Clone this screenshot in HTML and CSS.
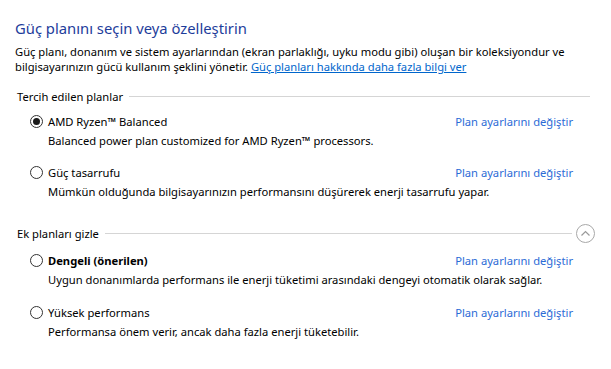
FILE: index.html
```html
<!DOCTYPE html>
<html lang="tr">
<head>
    <meta charset="UTF-8">
    <title>Güç Seçenekleri</title>
    <link rel="stylesheet" href="styles.css">
</head>
<body>
    <div class="page">
        <h1 class="title">Güç planını seçin veya özelleştirin</h1>
        <p class="intro">Güç planı, donanım ve sistem ayarlarından (ekran parlaklığı, uyku modu gibi) oluşan bir koleksiyondur ve bilgisayarınızın gücü kullanım şeklini yönetir. <a href="#" class="link">Güç planları hakkında daha fazla bilgi ver</a></p>

        <div class="section">
            <div class="section-head">
                <span class="section-label">Tercih edilen planlar</span>
                <span class="rule short"></span>
            </div>

            <div class="plan">
                <div class="plan-head">
                    <span class="radio checked"></span>
                    <span class="plan-name">AMD Ryzen™ Balanced</span>
                    <a href="#" class="plan-link">Plan ayarlarını değiştir</a>
                </div>
                <p class="plan-desc">Balanced power plan customized for AMD Ryzen™ processors.</p>
            </div>

            <div class="plan">
                <div class="plan-head">
                    <span class="radio"></span>
                    <span class="plan-name">Güç tasarrufu</span>
                    <a href="#" class="plan-link">Plan ayarlarını değiştir</a>
                </div>
                <p class="plan-desc">Mümkün olduğunda bilgisayarınızın performansını düşürerek enerji tasarrufu yapar.</p>
            </div>
        </div>

        <div class="section extra">
            <div class="section-head">
                <span class="section-label">Ek planları gizle</span>
                <span class="rule"></span>
                <span class="toggle">
                    <svg width="19" height="19" viewBox="0 0 19 19">
                        <circle cx="9.5" cy="9.5" r="9" fill="none" stroke="#a8a8a8" stroke-width="1"/>
                        <path d="M5.5 11.5 L9.5 7.5 L13.5 11.5" fill="none" stroke="#9a9a9a" stroke-width="1.2"/>
                    </svg>
                </span>
            </div>

            <div class="plan">
                <div class="plan-head">
                    <span class="radio"></span>
                    <span class="plan-name bold">Dengeli (önerilen)</span>
                    <a href="#" class="plan-link">Plan ayarlarını değiştir</a>
                </div>
                <p class="plan-desc">Uygun donanımlarda performans ile enerji tüketimi arasındaki dengeyi otomatik olarak sağlar.</p>
            </div>

            <div class="plan">
                <div class="plan-head">
                    <span class="radio"></span>
                    <span class="plan-name">Yüksek performans</span>
                    <a href="#" class="plan-link">Plan ayarlarını değiştir</a>
                </div>
                <p class="plan-desc">Performansa önem verir, ancak daha fazla enerji tüketebilir.</p>
            </div>
        </div>
    </div>
</body>
</html>
```

FILE: styles.css
```css
* {
    box-sizing: border-box;
    margin: 0;
    padding: 0;
}

body {
    font-family: "Noto Sans", Arial, sans-serif;
    font-size: 11.2px;
    color: #000;
    background: #fff;
}

.page {
    padding: 17px 16px 0 15px;
    width: 611px;
}

.title {
    font-size: 14.8px;
    font-weight: normal;
    color: #1e3d9b;
    line-height: 22px;
    margin-bottom: 5px;
}

.intro {
    line-height: 15px;
    padding-right: 10px;
}

.link {
    color: #0066cc;
}

.section {
    margin-top: 14px;
}

.section.extra {
    margin-top: 22px;
}

.section-head {
    display: flex;
    align-items: center;
    height: 16px;
    padding-left: 2px;
}

.extra .section-head {
    height: 20px;
}

.section-label {
    margin-right: 6px;
}

.rule {
    flex: 1;
    border-top: 1px solid #d5d5d5;
}

.rule.short {
    margin-right: 5px;
}

.toggle {
    display: flex;
    margin-left: 4px;
}

.plan {
    padding-left: 15px;
    padding-right: 22px;
    margin-top: 8px;
}

.plan + .plan {
    margin-top: 13px;
}

.extra .plan + .plan {
    margin-top: 14px;
}

.plan-head {
    display: flex;
    align-items: center;
    height: 19px;
}

.radio {
    width: 13px;
    height: 13px;
    border: 1px solid #333;
    border-radius: 50%;
    margin-right: 5px;
    display: flex;
    align-items: center;
    justify-content: center;
}

.radio.checked::after {
    content: "";
    width: 7px;
    height: 7px;
    border-radius: 50%;
    background: #1a1a1a;
}

.plan-name {
    flex: 1;
}

.bold {
    font-weight: bold;
}

.plan-link {
    color: #2b6bd6;
    text-decoration: none;
}

.plan-desc {
    line-height: 19px;
    padding-left: 18px;
}
```
